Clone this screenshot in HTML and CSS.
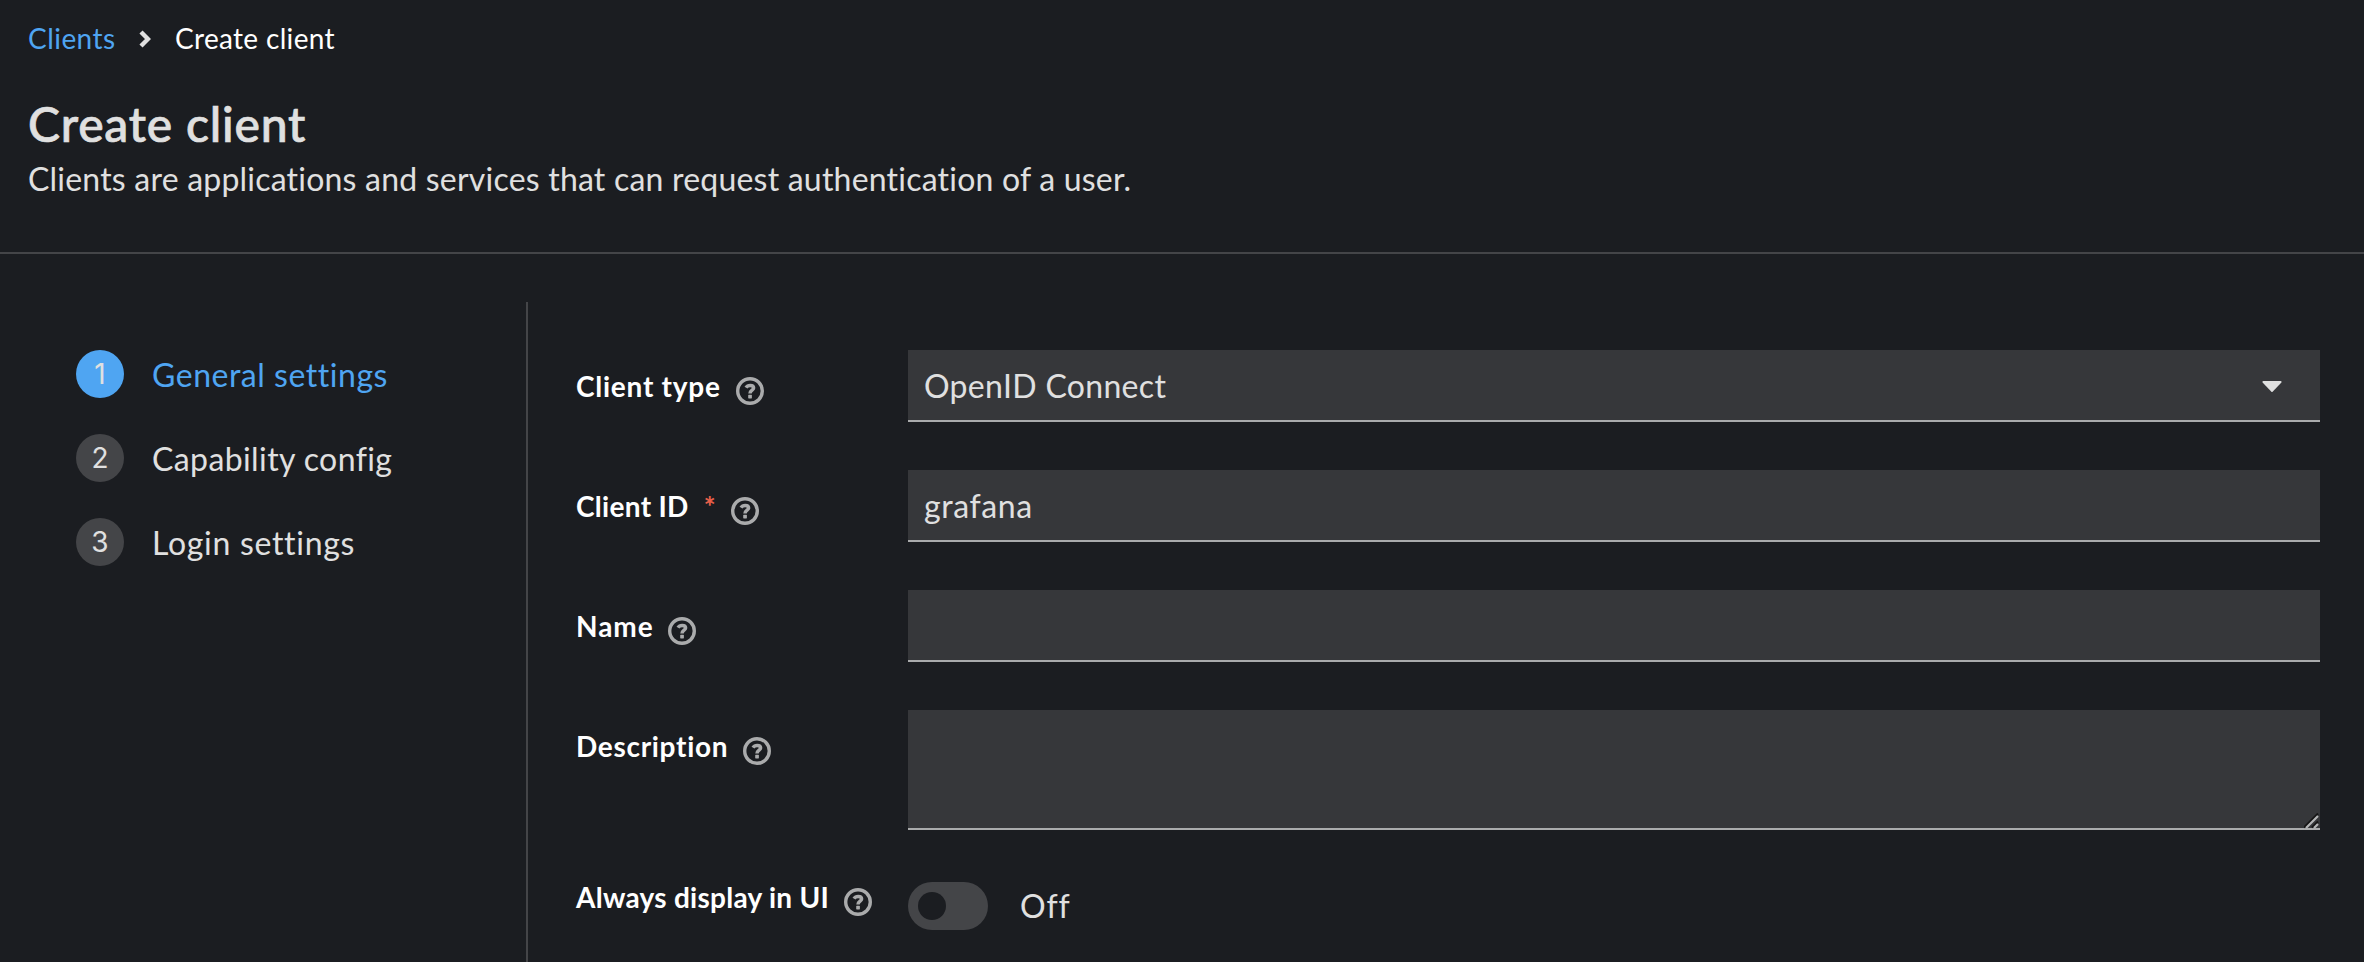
FILE: index.html
```html
<!DOCTYPE html>
<html lang="en">
<head>
<meta charset="utf-8">
<title>Create client</title>
<link rel="stylesheet" href="styles.css">
</head>
<body>
<svg class="defs" aria-hidden="true">
  <symbol id="help" viewBox="0 0 28 28">
    <circle cx="14" cy="14" r="12.3" fill="none" stroke="currentColor" stroke-width="3.4"/>
    <path d="M10 10.6C11 9 12.2 8.5 14.2 8.5C16.3 8.5 17.6 9.3 17.6 11C17.6 13.2 14 13.4 14 16.6" fill="none" stroke="currentColor" stroke-width="3.5"/>
    <rect x="12.2" y="17.8" width="3.7" height="3.6" rx=".6" fill="currentColor"/>
  </symbol>
</svg>
<header class="page-header">
  <nav class="breadcrumb">
    <a class="crumb-link" href="#">Clients</a>
    <svg class="chevron" viewBox="0 0 12 18"><path d="M2 2L9 9L2 16" fill="none" stroke="currentColor" stroke-width="4.4"/></svg>
    <span class="crumb-current">Create client</span>
  </nav>
  <h1 class="title">Create client</h1>
  <p class="subtitle">Clients are applications and services that can request authentication of a user.</p>
</header>
<main class="wizard">
  <ol class="steps">
    <li class="step active"><span class="step-num">1</span><span class="step-name general">General settings</span></li>
    <li class="step"><span class="step-num">2</span><span class="step-name capability">Capability config</span></li>
    <li class="step"><span class="step-num">3</span><span class="step-name login">Login settings</span></li>
  </ol>
  <form class="form">
    <div class="row">
      <div class="label"><span class="type">Client type</span><svg class="help"><use href="#help"/></svg></div>
      <div class="control select"><span class="openid">OpenID Connect</span><svg class="caret" viewBox="0 0 20 12"><path d="M1.4 0H18.6Q20.2.4 19.2 1.8L10.6 10.8Q10 11.3 9.4 10.8L.8 1.8Q-.2.4 1.4 0Z" fill="currentColor"/></svg></div>
    </div>
    <div class="row">
      <div class="label"><span class="client-id">Client ID</span><span class="required">*</span><svg class="help"><use href="#help"/></svg></div>
      <div class="control"><span class="grafana">grafana</span></div>
    </div>
    <div class="row">
      <div class="label"><span class="name">Name</span><svg class="help"><use href="#help"/></svg></div>
      <div class="control"></div>
    </div>
    <div class="row">
      <div class="label"><span class="description">Description</span><svg class="help"><use href="#help"/></svg></div>
      <div class="control area"><svg class="grip" viewBox="0 0 16 16"><path d="M0 14.5L14 .5M8 14.5L14 8.5" stroke="#151515" stroke-width="2" fill="none"/><path d="M2 15L14 3M10 15L14 11" stroke="#b4b5b6" stroke-width="2.2" fill="none"/></svg></div>
    </div>
    <div class="row">
      <div class="label compact"><span class="always">Always display in UI</span><svg class="help"><use href="#help"/></svg></div>
      <div class="switch"><span class="track"><span class="knob"></span></span><span class="off">Off</span></div>
    </div>
  </form>
</main>
</body>
</html>
```
FILE: styles.css
```css
* { box-sizing: border-box; margin: 0; padding: 0; }
html, body { height: 100%; }
body {
  display: flex;
  flex-direction: column;
  overflow: hidden;
  background: #1b1d21;
  color: #e0e0e0;
  font-family: Lato, "Liberation Sans", sans-serif;
  font-size: 32px;
  line-height: 48px;
  white-space: nowrap;
  font-variant-ligatures: none;
}
.defs { position: absolute; width: 0; height: 0; }
svg { display: block; flex: none; }

.page-header { flex: none; height: 254px; padding: 17px 28px 0; border-bottom: 2px solid #444548; }
.breadcrumb { display: flex; align-items: center; font-size: 28px; line-height: 42px; }
.crumb-link { width: 111px; color: #4fa5f2; text-decoration: none; letter-spacing: .45px; }
.chevron { width: 12px; height: 18px; margin: 2px 24px 0 0; }
.crumb-current { color: #fff; letter-spacing: .33px; }
.title { margin-top: 34px; font-size: 48px; line-height: 62px; font-weight: 500; letter-spacing: .8px; -webkit-text-stroke: .7px currentColor; }
.subtitle { letter-spacing: .21px; }

.wizard { flex: 1; min-height: 0; display: grid; grid-template-columns: 528px 1fr; padding-top: 48px; }
.steps { display: flex; flex-direction: column; gap: 36px; padding: 48px 0 0 76px; border-right: 2px solid #444548; list-style: none; }
.step { display: flex; gap: 28px; height: 48px; }
.step-num {
  width: 48px; height: 48px; border-radius: 50%;
  background: #444548; text-align: center;
  font-family: Inter, sans-serif; font-size: 28px;
}
.step-name { padding-top: 1px; }
.active .step-num { background: #4fa5f2; }
.active .step-name { color: #4fa5f2; }
.general { letter-spacing: .53px; }
.capability { letter-spacing: .4px; }
.login { letter-spacing: .7px; }

.form { display: flex; flex-direction: column; gap: 48px; padding: 48px 44px 0 48px; }
.row { display: grid; grid-template-columns: 332px 1fr; align-items: start; }
.label { display: flex; align-items: center; padding-top: 8px; color: #fff; font-size: 28px; font-weight: 700; line-height: 56px; }
.label.compact { padding-top: 0; line-height: 38px; }
.help { width: 28px; height: 28px; margin: 10px 0 0 14.5px; color: #aaabac; }
.type { letter-spacing: .75px; margin-right: 1px; }
.client-id { letter-spacing: .3px; }
.name { letter-spacing: .95px; }
.description { letter-spacing: .7px; }
.always { letter-spacing: .27px; }
.required { margin-left: 15px; margin-right: 1px; color: #e9604a; }

.control { height: 72px; padding: 12px 16px 0; background: #36373a; border-bottom: 2px solid #aaabac; }
.select { display: flex; justify-content: space-between; }
.openid { letter-spacing: .32px; }
.grafana { letter-spacing: .6px; }
.caret { width: 20px; height: 12px; margin: 19px 22px 0 0; }
.area { position: relative; height: 120px; }
.grip { position: absolute; right: 0; bottom: -1px; width: 16px; height: 16px; }

.switch { display: flex; align-items: center; gap: 32px; padding-top: 4px; }
.track { width: 80px; height: 48px; padding: 10px; border-radius: 24px; background: #444548; }
.knob { display: block; width: 28px; height: 28px; border-radius: 50%; background: #1b1d21; }
.off { letter-spacing: .9px; }
```
